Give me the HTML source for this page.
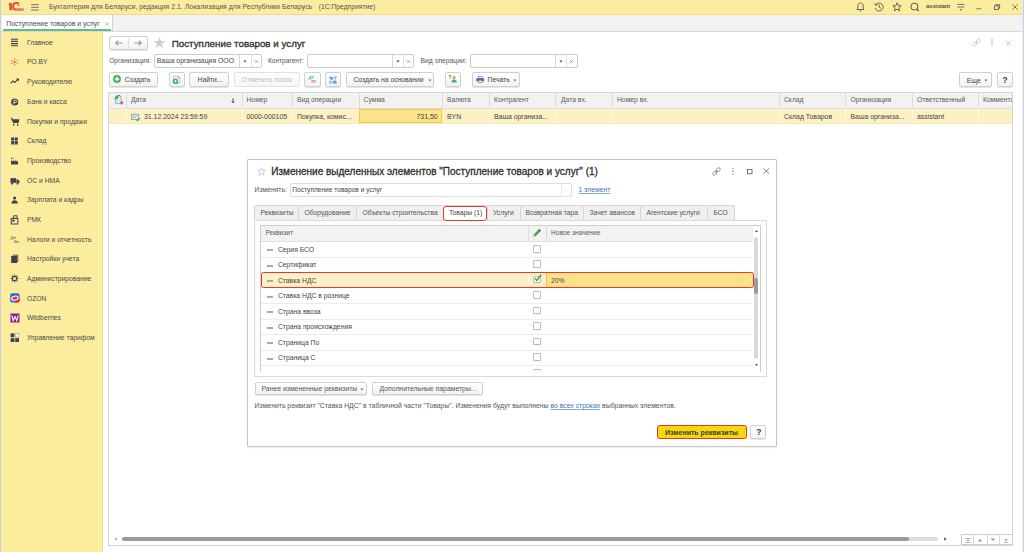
<!DOCTYPE html>
<html><head><meta charset="utf-8">
<style>
*{box-sizing:border-box;margin:0;padding:0}
html,body{width:1024px;height:552px;overflow:hidden;background:#fff;font-family:"Liberation Sans",sans-serif;color:#4a4a4a;font-size:7px}
.a{position:absolute}
.t{position:absolute;white-space:nowrap;line-height:1}
svg{position:absolute;overflow:visible}
#titlebar{left:0;top:0;width:1024px;height:15px;background:#fbec9e;border-bottom:1px solid #efdc8a}
#tabbar{left:0;top:15px;width:1024px;height:17px;background:#f2f2f3;border-bottom:1px solid #d9d9d9}
#sidebar{left:0;top:32px;width:103px;height:520px;background:#fbec9e;border-right:1px solid #e9dc98}
#leftstrip{left:0;top:0;width:1px;height:552px;background:#c9d0da}
#rightstrip{left:1022px;top:0;width:2px;height:552px;background:linear-gradient(90deg,#e9edf2 0,#e9edf2 50%,#c6d1e0 50%)}
.btn{position:absolute;border:1px solid #d0d0d0;border-radius:2px;background:linear-gradient(#fff,#f2f2f2);box-shadow:0 1px 0 rgba(0,0,0,.10)}
.inp{position:absolute;border:1px solid #cbcbcb;border-radius:2px;background:#fff}
.vl{position:absolute;width:1px;background:#dcdcdc}
.hl{position:absolute;height:1px;background:#e6e6e6}
.side .t{color:#4a4a4a;font-size:6.75px;left:27px}
.side svg{left:10px}
.cb{width:7.6px;height:7.6px;border:1px solid #bdbdbd;border-radius:1px;background:#fff;box-shadow:0 0.5px 0.5px rgba(0,0,0,.08)}
</style></head><body>
<div id="titlebar" class="a"></div>
<div id="tabbar" class="a"></div>
<div id="sidebar" class="a"></div>
<div id="leftstrip" class="a"></div>
<div id="rightstrip" class="a"></div>

<!-- title bar -->
<svg style="left:5px;top:0px" width="22" height="14" viewBox="0 0 22 14">
 <path d="M3.3 4.6L4.6 2.9H6.9V10.2H4.4V5.2Z" fill="#ea4a3a"/>
 <path d="M14 3.6C13.4 3.1 12.5 2.9 11.6 2.9C9.6 2.9 8.2 4.4 8.2 6.4C8.2 8.4 9.4 9.6 11 9.6" stroke="#e8453a" stroke-width="1.9" fill="none"/>
 <path d="M12.4 4.2C13.6 4.2 14.6 4.6 14.6 5.8L12.4 5.8Z" fill="#ec5a40"/>
 <rect x="10.2" y="8.2" width="8.6" height="2.5" rx="0.6" fill="#ef7068"/>
</svg>
<svg style="left:31px;top:4px" width="8" height="7" viewBox="0 0 8 7">
 <path d="M0.2 0.6H7.8M0.2 3.3H7.8M0.2 6H7.8" stroke="#666" stroke-width="0.9"/>
</svg>
<div class="t" style="left:49px;top:4px;font-size:6.95px;color:#555">Бухгалтерия для Беларуси, редакция 2.1. Локализация для Республики Беларусь</div>
<div class="t" style="left:318.7px;top:4px;font-size:6.75px;color:#555">(1С:Предприятие)</div>

<svg style="left:856px;top:2px" width="9" height="10" viewBox="0 0 9 10">
 <path d="M1 7.5 L1.8 6.2 L1.8 4 C1.8 2.2 3 1 4.5 1 C6 1 7.2 2.2 7.2 4 L7.2 6.2 L8 7.5 Z" stroke="#555" stroke-width="0.9" fill="none"/>
 <path d="M3.6 8.6 C3.8 9.3 5.2 9.3 5.4 8.6" stroke="#555" stroke-width="0.9" fill="none"/>
</svg>
<svg style="left:874px;top:2px" width="10" height="10" viewBox="0 0 10 10">
 <path d="M1.6 3 A4 4 0 1 1 1.2 6" stroke="#555" stroke-width="0.9" fill="none"/>
 <path d="M0.6 1.2 L1.6 3.2 L3.6 2.8" stroke="#555" stroke-width="0.9" fill="none"/>
 <path d="M5.2 2.6 V5.2 L7 6.4" stroke="#555" stroke-width="0.9" fill="none"/>
</svg>
<svg style="left:892px;top:2px" width="10" height="10" viewBox="0 0 10 10">
 <path d="M5 0.8 L6.2 3.7 L9.2 3.9 L6.9 5.8 L7.6 8.9 L5 7.2 L2.4 8.9 L3.1 5.8 L0.8 3.9 L3.8 3.7 Z" stroke="#555" stroke-width="0.9" fill="none"/>
</svg>
<svg style="left:910px;top:2px" width="10" height="10" viewBox="0 0 10 10">
 <circle cx="4.4" cy="4.6" r="3.5" stroke="#555" stroke-width="1" fill="none"/>
 <path d="M6.8 7 L8.8 9" stroke="#555" stroke-width="1.2"/>
</svg>
<div class="t" style="left:926px;top:4px;font-size:5.9px;color:#555;font-weight:bold;letter-spacing:-0.2px">assistant</div>
<svg style="left:956.5px;top:3px" width="8" height="9" viewBox="0 0 8 9"><path d="M0.3 1.4H7.4M0.3 4H7.4" stroke="#666" stroke-width="0.9"/><path d="M2.4 6.2H5.3L3.85 7.7Z" fill="#555"/></svg>
<svg style="left:976px;top:3px" width="7" height="9" viewBox="0 0 7 9">
 <path d="M0.2 5.8H5.3" stroke="#777" stroke-width="1"/>
</svg>
<svg style="left:994px;top:4px" width="7" height="7" viewBox="0 0 7 7">
 <rect x="0.5" y="1.8" width="3.8" height="3.8" stroke="#666" stroke-width="0.9" fill="none"/>
 <path d="M1.8 1.8V0.6H5.6V4.4H4.3" stroke="#666" stroke-width="0.9" fill="none"/>
</svg>
<svg style="left:1011.8px;top:3.8px" width="6" height="6" viewBox="0 0 6 6">
 <path d="M0.3 0.3L5.7 5.7M5.7 0.3L0.3 5.7" stroke="#666" stroke-width="0.8"/>
</svg>

<!-- tab -->
<div class="a" style="left:2px;top:15px;width:111px;height:16px;background:#fff;border-right:1px solid #d0d0d0"></div>
<div class="a" style="left:3px;top:29px;width:108px;height:2px;background:#5cbf85"></div>
<div class="t" style="left:6.3px;top:20.5px;font-size:6.85px;color:#4a4a4a">Поступление товаров и услуг</div>
<svg style="left:104.5px;top:21.8px" width="4.5" height="4" viewBox="0 0 4.5 4"><path d="M0.3 0.2L4.2 3.8M4.2 0.2L0.3 3.8" stroke="#b0b0b0" stroke-width="0.75"/></svg>
<!-- sidebar -->
<div class="side">
<svg style="top:38px" width="9" height="9" viewBox="0 0 9 9"><path d="M1 1.2H8M1 3.4H8M1 5.6H8M1 7.8H8" stroke="#3f4150" stroke-width="1.1"/></svg>
<div class="t" style="top:39.9px">Главное</div>
<svg style="top:57.5px" width="9" height="8" viewBox="0 0 9 8">
 <circle cx="4.6" cy="4" r="1.3" fill="#f07a2a"/>
 <path d="M4.6 0.5V2M4.6 6V7.6M1 2.2L2.6 3.2M6.6 4.8L8.2 5.8M8.2 2.2L6.6 3.2M2.6 4.8L1 5.8" stroke="#ee5a6a" stroke-width="0.9"/>
</svg>
<div class="t" style="top:59.4px">РО.BY</div>
<svg style="top:78px" width="10" height="6" viewBox="0 0 10 6"><path d="M0.6 5.4L3 3L4.8 4.4L8 1.2" stroke="#3f4150" stroke-width="1.1" fill="none"/><path d="M6 0.6H9V3.6Z" fill="#3f4150"/></svg>
<div class="t" style="top:79.2px">Руководителю</div>
<svg style="top:97.5px" width="9" height="8" viewBox="0 0 9 8"><circle cx="4.7" cy="4" r="3.6" fill="#3f4150"/><path d="M4 6.5V2.2H5.4C6.4 2.2 6.8 2.8 6.8 3.4C6.8 4 6.4 4.6 5.4 4.6H4" stroke="#fbec9e" stroke-width="0.9" fill="none"/></svg>
<div class="t" style="top:98.9px">Банк и касса</div>
<svg style="top:116.5px" width="10" height="9" viewBox="0 0 10 9"><path d="M0.5 0.8H2L2.8 2.2H9.4L8.6 6H3.2Z" fill="#3f4150"/><rect x="3" y="6.8" width="1.4" height="1.8" fill="#3f4150"/><rect x="7" y="6.8" width="1.4" height="1.8" fill="#3f4150"/></svg>
<div class="t" style="top:118.5px">Покупки и продажи</div>
<svg style="top:137px" width="9" height="8" viewBox="0 0 9 8"><rect x="1.2" y="0.5" width="3" height="3" fill="#3f4150"/><rect x="4.8" y="0.5" width="3" height="3" fill="#3f4150"/><rect x="1.2" y="4" width="3" height="3" fill="#3f4150"/><rect x="4.8" y="4" width="3" height="3" fill="#3f4150"/><path d="M0.8 7.6H8.2" stroke="#6a6a70" stroke-width="0.6"/></svg>
<div class="t" style="top:138.2px">Склад</div>
<svg style="top:156.5px" width="9" height="8" viewBox="0 0 9 8"><path d="M1 7.4V3.2L3 4.4V3.2L5.2 4.4V3.2L8 4.6V7.4Z" fill="#3f4150"/><rect x="1" y="0.6" width="1.2" height="1.2" fill="#3f4150"/><rect x="2.8" y="1.4" width="1" height="1" fill="#6a6a70"/></svg>
<div class="t" style="top:157.9px">Производство</div>
<svg style="top:176.5px" width="10" height="8" viewBox="0 0 10 8"><rect x="0.5" y="1.2" width="5.6" height="4.6" fill="#3f4150"/><path d="M6.4 2.6H8.2L9.5 4.2V5.8H6.4Z" fill="#3f4150"/><circle cx="2.2" cy="6.6" r="1.1" fill="#3f4150"/><circle cx="7.6" cy="6.6" r="1.1" fill="#3f4150"/></svg>
<div class="t" style="top:177.6px">ОС и НМА</div>
<svg style="top:196px" width="9" height="8" viewBox="0 0 9 8"><circle cx="4.6" cy="2" r="1.6" fill="#3f4150"/><path d="M1.4 7.4C1.6 5.2 2.8 4.3 4.6 4.3C6.4 4.3 7.6 5.2 7.8 7.4Z" fill="#3f4150"/></svg>
<div class="t" style="top:197.3px">Зарплата и кадры</div>
<svg style="top:214.5px" width="9" height="10" viewBox="0 0 9 10"><rect x="1.2" y="3.4" width="6.6" height="5.6" fill="none" stroke="#3f4150" stroke-width="1"/><rect x="3.6" y="0.8" width="3.4" height="2.6" fill="none" stroke="#3f4150" stroke-width="0.9"/><rect x="2.2" y="4.6" width="2.4" height="2" fill="#3f4150"/></svg>
<div class="t" style="top:216.9px">РМК</div>
<svg style="top:234.5px" width="9" height="9" viewBox="0 0 9 9"><text x="0.5" y="4" font-size="3.6" font-family="Liberation Sans" font-style="italic" fill="#3f4150">Дт</text><text x="4" y="8" font-size="3.6" font-family="Liberation Sans" font-style="italic" fill="#3f4150">Кт</text></svg>
<div class="t" style="top:236.6px">Налоги и отчетность</div>
<svg style="top:254px" width="9" height="10" viewBox="0 0 9 10"><rect x="1.2" y="2" width="5.8" height="7" fill="#3f4150"/><path d="M2.8 1.2H7.8V8" stroke="#3f4150" stroke-width="0.9" fill="none"/></svg>
<div class="t" style="top:256.3px">Настройки учета</div>
<svg style="top:274px" width="9" height="9" viewBox="0 0 9 9"><circle cx="4.6" cy="4.5" r="2.2" stroke="#3f4150" stroke-width="1.2" fill="none"/><path d="M4.6 0.5V1.8M4.6 7.2V8.5M0.6 4.5H1.9M7.3 4.5H8.6M1.8 1.7L2.7 2.6M6.5 6.4L7.4 7.3M7.4 1.7L6.5 2.6M2.7 6.4L1.8 7.3" stroke="#3f4150" stroke-width="1.1"/></svg>
<div class="t" style="top:275.9px">Администрирование</div>
<svg style="top:293.3px" width="10" height="10" viewBox="0 0 10 10"><rect x="0.2" y="0.2" width="9.4" height="9.4" rx="1.8" fill="#2a6ae8"/><path d="M9.6 4.6V7.8A1.8 1.8 0 0 1 7.8 9.6H3.4Z" fill="#e3323b"/><ellipse cx="4.9" cy="5.1" rx="3.9" ry="2.5" transform="rotate(-12 4.9 5.1)" fill="#fff"/><ellipse cx="4.9" cy="5.1" rx="2.7" ry="1.5" transform="rotate(-12 4.9 5.1)" fill="#e3323b"/></svg>
<div class="t" style="top:295.6px">OZON</div>
<svg style="top:313px" width="10" height="10" viewBox="0 0 10 10"><rect x="0.5" y="0.5" width="9" height="9" fill="#8e1b8f"/><path d="M1.8 2.4L3.2 7.6L5 3.6L6.8 7.6L8.2 2.4" stroke="#fff" stroke-width="1.1" fill="none"/></svg>
<div class="t" style="top:315.3px">Wildberries</div>
<svg style="top:332.8px" width="10" height="10" viewBox="0 0 10 10"><rect x="0.6" y="0.4" width="3.8" height="3.8" fill="#3f4150"/><rect x="5.3" y="0.6" width="3.5" height="3.5" fill="#fff" stroke="#8a8a90" stroke-width="0.5"/><rect x="0.6" y="5.2" width="3.8" height="3.8" fill="#3f4150"/><rect x="5.2" y="5.2" width="3.8" height="3.8" fill="#3f4150"/></svg>
<div class="t" style="top:334.9px">Управление тарифом</div>
</div>
<!-- main form header -->
<div class="btn" style="left:108.7px;top:36px;width:39.3px;height:13.5px"></div>
<div class="vl" style="left:128px;top:37.5px;height:11px;background:#dedede"></div>
<svg style="left:115px;top:40px" width="8" height="6" viewBox="0 0 8 6"><path d="M0.8 3H7.6M3.2 0.6L0.8 3L3.2 5.4" stroke="#9a9a9a" stroke-width="1.2" fill="none"/></svg>
<svg style="left:134px;top:40px" width="8" height="6" viewBox="0 0 8 6"><path d="M0.4 3H7.2M4.8 0.6L7.2 3L4.8 5.4" stroke="#9a9a9a" stroke-width="1.2" fill="none"/></svg>
<svg style="left:153.2px;top:37px" width="13" height="11" viewBox="0 0 13 11"><path d="M6.5 0.2L8.1 4.1L12.4 4.2L9 6.8L10.3 10.9L6.5 8.5L2.7 10.9L4 6.8L0.6 4.2L4.9 4.1Z" fill="#cfcfcf"/></svg>
<div class="t" style="left:171.7px;top:38.7px;font-size:9.8px;color:#2e2e2e;-webkit-text-stroke:0.3px #2e2e2e">Поступление товаров и услуг</div>

<svg style="left:972.2px;top:38px" width="9" height="9" viewBox="0 0 9 9"><rect x="4.2" y="1.1" width="4.2" height="3.2" rx="1.6" transform="rotate(-45 6.3 2.7)" fill="none" stroke="#c4c4c4" stroke-width="0.75"/><rect x="0.6" y="4.7" width="4.2" height="3.2" rx="1.6" transform="rotate(-45 2.7 6.3)" fill="none" stroke="#c4c4c4" stroke-width="0.75"/><path d="M3.5 5.5L5.5 3.5" stroke="#c4c4c4" stroke-width="0.75"/></svg>
<svg style="left:991px;top:39px" width="2" height="7" viewBox="0 0 2 7"><path d="M1 0.3V1.4M1 2.9V4M1 5.5V6.6" stroke="#8a8a8a" stroke-width="1.1"/></svg>
<svg style="left:1006.3px;top:40.7px" width="5" height="5" viewBox="0 0 5 5"><path d="M0.3 0.3L4.5 4.5M4.5 0.3L0.3 4.5" stroke="#b0b0b0" stroke-width="0.8"/></svg>

<!-- filters -->
<div class="t" style="left:109.2px;top:58.4px;font-size:6.6px;color:#555">Организация:</div>
<div class="inp" style="left:154.3px;top:54px;width:108px;height:13.5px"></div>
<div class="vl" style="left:239px;top:55px;height:11.5px;background:#d6d6d6"></div>
<div class="vl" style="left:251px;top:55px;height:11.5px;background:#e0e0e0"></div>
<div class="t" style="left:156.8px;top:58.2px;font-size:6.85px;color:#444">Ваша организация ООО</div>
<svg style="left:243px;top:60px" width="4" height="3" viewBox="0 0 4 3"><path d="M0.3 0.5H3.7L2 2.6Z" fill="#555"/></svg>
<svg style="left:254.5px;top:59.5px" width="3" height="3" viewBox="0 0 3 3"><path d="M0.2 0.2L2.8 2.8M2.8 0.2L0.2 2.8" stroke="#8a8a8a" stroke-width="0.7"/></svg>

<div class="t" style="left:267.9px;top:58.4px;font-size:6.6px;color:#555">Контрагент:</div>
<div class="inp" style="left:307.4px;top:54px;width:107px;height:13.5px"></div>
<div class="vl" style="left:392px;top:55px;height:11.5px;background:#d6d6d6"></div>
<div class="vl" style="left:403px;top:55px;height:11.5px;background:#e0e0e0"></div>
<svg style="left:396px;top:60px" width="4" height="3" viewBox="0 0 4 3"><path d="M0.3 0.5H3.7L2 2.6Z" fill="#555"/></svg>
<svg style="left:406.5px;top:59.5px" width="3" height="3" viewBox="0 0 3 3"><path d="M0.2 0.2L2.8 2.8M2.8 0.2L0.2 2.8" stroke="#8a8a8a" stroke-width="0.7"/></svg>

<div class="t" style="left:420.6px;top:58.4px;font-size:6.75px;color:#555">Вид операции:</div>
<div class="inp" style="left:470.2px;top:54px;width:107.5px;height:13.5px"></div>
<div class="vl" style="left:555px;top:55px;height:11.5px;background:#d6d6d6"></div>
<div class="vl" style="left:566px;top:55px;height:11.5px;background:#e0e0e0"></div>
<svg style="left:558.5px;top:60px" width="4" height="3" viewBox="0 0 4 3"><path d="M0.3 0.5H3.7L2 2.6Z" fill="#555"/></svg>
<svg style="left:569.5px;top:59.5px" width="3" height="3" viewBox="0 0 3 3"><path d="M0.2 0.2L2.8 2.8M2.8 0.2L0.2 2.8" stroke="#8a8a8a" stroke-width="0.7"/></svg>

<!-- command bar -->
<div class="btn" style="left:109.3px;top:72.3px;width:48.3px;height:14.3px"></div>
<svg style="left:112.8px;top:75.4px" width="8" height="8" viewBox="0 0 8 8"><circle cx="4" cy="4" r="3.9" fill="#3cb55a"/><path d="M4 1.8V6.2M1.8 4H6.2" stroke="#fff" stroke-width="1.3"/></svg>
<div class="t" style="left:124.8px;top:77.2px;font-size:6.75px;color:#444">Создать</div>

<div class="btn" style="left:169.2px;top:72.3px;width:15.6px;height:14.3px"></div>
<svg style="left:172px;top:75px" width="10" height="10" viewBox="0 0 10 10"><path d="M1.4 1.2H6L8 3.2V7.8H1.4Z" fill="#fff" stroke="#a9b0b8" stroke-width="0.7"/><path d="M6 1.2V3.2H8" fill="none" stroke="#7f9fc8" stroke-width="0.7"/><circle cx="3.5" cy="6.2" r="2.8" fill="#3cb55a"/><path d="M3.5 4.9V7.5M2.2 6.2H4.8" stroke="#fff" stroke-width="0.9"/></svg>

<div class="btn" style="left:189.4px;top:72.3px;width:40px;height:14.3px"></div>
<div class="t" style="left:197.6px;top:77.2px;font-size:6.75px;color:#444">Найти...</div>

<div class="btn" style="left:234.2px;top:72.3px;width:65.6px;height:14.3px;border-color:#e2e2e2;box-shadow:none;background:linear-gradient(#fff,#f6f6f6)"></div>
<div class="t" style="left:241.8px;top:77.2px;font-size:6.75px;color:#bdbdbd">Отменить поиск</div>

<div class="btn" style="left:304.2px;top:72.3px;width:16.4px;height:14.3px"></div>
<svg style="left:307.5px;top:75px" width="10" height="9" viewBox="0 0 10 9"><text x="0.4" y="4" font-size="4" font-weight="bold" font-style="italic" font-family="Liberation Sans" fill="#3cb55a">ДТ</text><text x="3.4" y="8.2" font-size="3.8" font-weight="bold" font-family="Liberation Sans" fill="#e8553c">КТ</text></svg>

<div class="btn" style="left:325.3px;top:72.3px;width:15.3px;height:14.3px"></div>
<svg style="left:329px;top:75.5px" width="8" height="8" viewBox="0 0 8 8"><path d="M0.4 2.4V0.4H2.4M5.6 0.4H7.6V2.4M7.6 5.6V7.6H5.6M2.4 7.6H0.4V5.6" stroke="#8fb3de" stroke-width="0.7" fill="none"/><rect x="1.2" y="1" width="3" height="2.6" fill="#6d9bd6"/><rect x="3.8" y="4.6" width="3.4" height="2.8" fill="#6d9bd6"/><path d="M4.8 1.6L6.4 1.6L6.4 3.6M3.2 6.4L1.6 6.4L1.6 4.4" stroke="#5a8ac8" stroke-width="0.7" fill="none"/></svg>

<div class="btn" style="left:346.4px;top:72.3px;width:87.8px;height:14.3px"></div>
<div class="t" style="left:353.5px;top:77.2px;font-size:6.75px;color:#444">Создать на основании</div>
<svg style="left:428px;top:79.2px" width="4" height="3" viewBox="0 0 4 3"><path d="M0.3 0.4H3.5L1.9 2.4Z" fill="#777"/></svg>

<div class="btn" style="left:445.4px;top:72.3px;width:15.9px;height:14.3px"></div>
<svg style="left:448px;top:74px" width="10" height="10" viewBox="0 0 10 10"><text x="0.6" y="5" font-size="4.6" font-weight="bold" font-family="Liberation Sans" fill="#555">?</text><circle cx="6.1" cy="3.8" r="1.7" fill="#d9a55a"/><path d="M3.3 8.6C3.4 6.6 4.4 5.6 6.1 5.6C7.8 5.6 8.7 6.6 8.8 8.6Z" fill="#4bb56a"/></svg>

<div class="btn" style="left:472.4px;top:72.3px;width:47.9px;height:14.3px"></div>
<svg style="left:475.7px;top:75.8px" width="9" height="7" viewBox="0 0 9 7"><rect x="2.3" y="0.3" width="3.8" height="2" fill="#fff" stroke="#4a74ad" stroke-width="0.6"/><rect x="0.3" y="2" width="7.8" height="3.4" rx="0.9" fill="#4a74ad"/><rect x="2.3" y="4.2" width="3.8" height="2.4" fill="#fff" stroke="#4a74ad" stroke-width="0.6"/></svg>
<div class="t" style="left:487.6px;top:77.2px;font-size:6.75px;color:#444">Печать</div>
<svg style="left:513.2px;top:79.2px" width="4" height="3" viewBox="0 0 4 3"><path d="M0.3 0.4H3.5L1.9 2.4Z" fill="#777"/></svg>

<div class="btn" style="left:959.4px;top:72.3px;width:32.6px;height:14.3px"></div>
<div class="t" style="left:966.7px;top:77.2px;font-size:7px;color:#444">Еще</div>
<svg style="left:984px;top:79.2px" width="4" height="3" viewBox="0 0 4 3"><path d="M0.3 0.4H3.5L1.9 2.4Z" fill="#777"/></svg>
<div class="btn" style="left:997px;top:72.3px;width:16px;height:14.3px"></div>
<div class="t" style="left:1002.4px;top:76px;font-size:8.4px;font-weight:bold;color:#3a3a3a">?</div>
<!-- list table -->
<div class="a" style="left:108px;top:92px;width:905px;height:454px;border:1px solid #d6d6d6;background:#fff"></div>
<div class="a" style="left:109px;top:93px;width:903px;height:16px;background:#f2f2f2;border-bottom:1px solid #dedede"></div>
<div class="a" style="left:109px;top:109px;width:903px;height:15px;background:#fdf0c3;border-bottom:1px solid #f6e9c0"></div>
<div class="vl" style="left:126px;top:93px;height:15px;background:#dcdcdc"></div>
<div class="vl" style="left:242px;top:93px;height:15px;background:#dcdcdc"></div>
<div class="vl" style="left:292px;top:93px;height:15px;background:#dcdcdc"></div>
<div class="vl" style="left:359px;top:93px;height:15px;background:#dcdcdc"></div>
<div class="vl" style="left:442px;top:93px;height:15px;background:#dcdcdc"></div>
<div class="vl" style="left:489px;top:93px;height:15px;background:#dcdcdc"></div>
<div class="vl" style="left:555px;top:93px;height:15px;background:#dcdcdc"></div>
<div class="vl" style="left:612px;top:93px;height:15px;background:#dcdcdc"></div>
<div class="vl" style="left:779px;top:93px;height:15px;background:#dcdcdc"></div>
<div class="vl" style="left:845px;top:93px;height:15px;background:#dcdcdc"></div>
<div class="vl" style="left:912px;top:93px;height:15px;background:#dcdcdc"></div>
<div class="vl" style="left:978px;top:93px;height:15px;background:#dcdcdc"></div>
<div class="a" style="left:126px;top:109px;width:1px;height:14px;border-left:1px dotted #fff"></div>
<div class="a" style="left:242px;top:109px;width:1px;height:14px;border-left:1px dotted #fff"></div>
<div class="a" style="left:292px;top:109px;width:1px;height:14px;border-left:1px dotted #fff"></div>
<div class="a" style="left:489px;top:109px;width:1px;height:14px;border-left:1px dotted #fff"></div>
<div class="a" style="left:555px;top:109px;width:1px;height:14px;border-left:1px dotted #fff"></div>
<div class="a" style="left:612px;top:109px;width:1px;height:14px;border-left:1px dotted #fff"></div>
<div class="a" style="left:779px;top:109px;width:1px;height:14px;border-left:1px dotted #fff"></div>
<div class="a" style="left:845px;top:109px;width:1px;height:14px;border-left:1px dotted #fff"></div>
<div class="a" style="left:912px;top:109px;width:1px;height:14px;border-left:1px dotted #fff"></div>
<div class="a" style="left:978px;top:109px;width:1px;height:14px;border-left:1px dotted #fff"></div>
<div class="a" style="left:359px;top:109px;width:83px;height:14px;background:#fbe38c;border:1px solid #f3cd3c"></div>
<svg style="left:113.5px;top:95px" width="10" height="10" viewBox="0 0 10 10"><path d="M1.6 3.2C1.6 1.8 2.8 0.6 4.4 0.6C6 0.6 7.4 1.8 7.4 3.4V8.6H1.6Z" fill="#dbe8f5" stroke="#7d9dc6" stroke-width="0.7"/><path d="M0.8 3.4C0.8 1.6 2.2 0.4 3.8 0.6L4.6 2.6L2.6 4.4Z" fill="#3cae5a"/><path d="M3.8 0.5L5.6 0.3L6.4 1.6" stroke="#444" stroke-width="0.6" fill="none"/><path d="M0.4 3.6L1.4 5" stroke="#b08050" stroke-width="0.7"/><path d="M6.2 7.8H9.4M7.8 6.2V9.4" stroke="#e23a3a" stroke-width="1.1"/></svg>
<div class="hdrt" style="color:#5a5a5a">
<div class="t" style="left:131px;top:96.8px;font-size:6.75px">Дата</div>
<svg style="left:231px;top:97.5px" width="4" height="5" viewBox="0 0 4 5"><path d="M2 0.2V4.6M0.7 3.2L2 4.8L3.3 3.2" stroke="#333" stroke-width="0.8" fill="none"/></svg>
<div class="t" style="left:246.5px;top:96.8px;font-size:6.75px">Номер</div>
<div class="t" style="left:297px;top:96.8px;font-size:6.75px">Вид операции</div>
<div class="t" style="left:363.6px;top:96.8px;font-size:6.75px">Сумма</div>
<div class="t" style="left:447px;top:96.8px;font-size:6.75px">Валюта</div>
<div class="t" style="left:494px;top:96.8px;font-size:6.75px">Контрагент</div>
<div class="t" style="left:561px;top:96.8px;font-size:6.75px">Дата вх.</div>
<div class="t" style="left:617px;top:96.8px;font-size:6.75px">Номер вх.</div>
<div class="t" style="left:784px;top:96.8px;font-size:6.75px">Склад</div>
<div class="t" style="left:850.5px;top:96.8px;font-size:6.75px">Организация</div>
<div class="t" style="left:917px;top:96.8px;font-size:6.75px">Ответственный</div>
<div class="a" style="left:983px;top:96px;width:29px;height:10px;overflow:hidden"><div class="t" style="left:0;top:0.8px;font-size:6.75px">Комментарий</div></div>
</div>
<svg style="left:131px;top:112.6px" width="10" height="9" viewBox="0 0 10 9"><rect x="0.5" y="1.2" width="7" height="5.2" fill="#e8ecf0" stroke="#7d8a96" stroke-width="0.7"/><path d="M1.5 3H6.5M1.5 4.6H5" stroke="#7d8a96" stroke-width="0.5"/><path d="M5.4 6.6L6.6 7.8L9.2 5" stroke="#2fa84f" stroke-width="1.1" fill="none"/></svg>
<div class="rowt" style="color:#444">
<div class="t" style="left:144px;top:113.5px;font-size:6.9px">31.12.2024 23:59:59</div>
<div class="t" style="left:246.5px;top:113.5px;font-size:6.9px">0000-000105</div>
<div class="t" style="left:297px;top:113.5px;font-size:6.9px">Покупка, комис...</div>
<div class="t" style="left:416.5px;top:113.5px;font-size:6.9px">731,50</div>
<div class="t" style="left:447px;top:113.5px;font-size:6.9px">BYN</div>
<div class="t" style="left:494px;top:113.5px;font-size:6.9px">Ваша организа...</div>
<div class="t" style="left:784px;top:113.5px;font-size:6.9px">Склад Товаров</div>
<div class="t" style="left:850.5px;top:113.5px;font-size:6.9px">Ваша организа...</div>
<div class="t" style="left:917px;top:113.5px;font-size:6.9px">assistant</div>
</div>
<!-- bottom scrollbar + nav -->
<svg style="left:113.5px;top:536.8px" width="3" height="4" viewBox="0 0 3 4"><path d="M2.6 0.2V3.8L0.2 2Z" fill="#aaa"/></svg>
<div class="a" style="left:121.7px;top:537.3px;width:816.5px;height:3.6px;border-radius:2px;background:#dcdcdc"></div>
<div class="a" style="left:121.7px;top:537.3px;width:787.3px;height:3.6px;border-radius:2px;background:#9a9a9a"></div>
<svg style="left:943.5px;top:537px" width="3" height="4" viewBox="0 0 3 4"><path d="M0.2 0.2V3.8L2.6 2Z" fill="#555"/></svg>
<div class="a" style="left:961px;top:534.2px;width:51.6px;height:11.3px;border:1px solid #cdcdcd;background:#fff"></div>
<div class="vl" style="left:973.3px;top:534.2px;height:11px;background:#d6d6d6"></div>
<div class="vl" style="left:986.5px;top:534.2px;height:11px;background:#d6d6d6"></div>
<div class="vl" style="left:999.4px;top:534.2px;height:11px;background:#d6d6d6"></div>
<svg style="left:964.5px;top:537.5px" width="6" height="5" viewBox="0 0 6 5"><path d="M0.5 0.5H5.5M0.5 4.5H5.5" stroke="#999" stroke-width="0.7"/><path d="M1.5 2.6H4.5L3 1.4Z M1.5 2.4H4.5L3 3.6Z" fill="#999"/></svg>
<svg style="left:977px;top:538.2px" width="6" height="4" viewBox="0 0 6 4"><path d="M0.6 3.4H5.4L3 1Z" fill="#999"/></svg>
<svg style="left:990px;top:538.2px" width="6" height="4" viewBox="0 0 6 4"><path d="M0.6 0.6H5.4L3 3Z" fill="#999"/></svg>
<svg style="left:1003px;top:537.5px" width="6" height="5" viewBox="0 0 6 5"><path d="M0.5 4.5H5.5" stroke="#999" stroke-width="0.7"/><path d="M1.2 1.2H4.8L3 3.4Z" fill="#999"/></svg>
<!-- dialog -->
<div class="a" style="left:247px;top:159px;width:530px;height:287.5px;background:#fff;border:1px solid #c6c6c6;border-radius:1px;box-shadow:0 0 2px rgba(0,0,0,.05),0 1px 2px rgba(0,0,0,.05)"></div>
<svg style="left:256.5px;top:167px" width="9" height="9" viewBox="0 0 9 9"><path d="M4.5 0.5L5.6 3.3L8.5 3.4L6.2 5.2L7.1 8.3L4.5 6.6L1.9 8.3L2.8 5.2L0.5 3.4L3.4 3.3Z" fill="none" stroke="#c4c4c4" stroke-width="0.8"/></svg>
<div class="t" style="left:271.25px;top:167.3px;font-size:10px;color:#2e2e2e;-webkit-text-stroke:0.3px #2e2e2e">Изменение выделенных элементов "Поступление товаров и услуг" (1)</div>
<svg style="left:711.5px;top:166.5px" width="9" height="9" viewBox="0 0 9 9"><rect x="4.2" y="1.1" width="4.2" height="3.2" rx="1.6" transform="rotate(-45 6.3 2.7)" fill="none" stroke="#777" stroke-width="0.75"/><rect x="0.6" y="4.7" width="4.2" height="3.2" rx="1.6" transform="rotate(-45 2.7 6.3)" fill="none" stroke="#777" stroke-width="0.75"/><path d="M3.5 5.5L5.5 3.5" stroke="#777" stroke-width="0.75"/></svg>
<svg style="left:732.2px;top:168px" width="2" height="7" viewBox="0 0 2 7"><path d="M1 0.3V1.4M1 2.9V4M1 5.5V6.6" stroke="#555" stroke-width="1"/></svg>
<svg style="left:746.6px;top:168.8px" width="6" height="6" viewBox="0 0 6 6"><rect x="0.4" y="0.4" width="4.6" height="4.4" fill="none" stroke="#555" stroke-width="0.8"/></svg>
<svg style="left:762.5px;top:168px" width="6.5" height="6" viewBox="0 0 6.5 6"><path d="M0.4 0.3L6.1 5.7M6.1 0.3L0.4 5.7" stroke="#666" stroke-width="0.8"/></svg>

<div class="t" style="left:254.6px;top:187.2px;font-size:6.75px;color:#555">Изменять:</div>
<div class="inp" style="left:289.8px;top:183px;width:282.5px;height:13.8px;border-color:#dedede"></div>
<div class="vl" style="left:561px;top:184px;height:11.8px;background:#e6e6e6"></div>
<div class="t" style="left:292.3px;top:187.2px;font-size:6.6px;color:#444">Поступление товаров и услуг</div>
<div class="t" style="left:564.5px;top:186px;font-size:6px;color:#bbb">...</div>
<div class="t" style="left:578.4px;top:187.2px;font-size:6.75px;color:#4072b8;text-decoration:underline;text-decoration-color:#86a8d8">1 элемент</div>

<!-- tabs -->
<div class="a" style="left:254px;top:220px;width:513px;height:157px;border:1px solid #dadada;background:#fff"></div>
<div class="tabs">
<div class="a" style="left:254px;top:205px;width:45px;height:15px;background:#efefef;border:1px solid #d6d6d6;border-bottom:none;border-radius:2px 2px 0 0;"></div>
<div class="a" style="left:298px;top:205px;width:59px;height:15px;background:#efefef;border:1px solid #d6d6d6;border-bottom:none;border-radius:2px 2px 0 0;"></div>
<div class="a" style="left:356px;top:205px;width:88px;height:15px;background:#efefef;border:1px solid #d6d6d6;border-bottom:none;border-radius:2px 2px 0 0;"></div>
<div class="a" style="left:443px;top:205px;width:45px;height:16px;background:#fff;border:1px solid #d6d6d6;border-bottom:none;border-radius:2px 2px 0 0;"></div>
<div class="a" style="left:487px;top:205px;width:34px;height:15px;background:#efefef;border:1px solid #d6d6d6;border-bottom:none;border-radius:2px 2px 0 0;"></div>
<div class="a" style="left:520px;top:205px;width:64px;height:15px;background:#efefef;border:1px solid #d6d6d6;border-bottom:none;border-radius:2px 2px 0 0;"></div>
<div class="a" style="left:583px;top:205px;width:58px;height:15px;background:#efefef;border:1px solid #d6d6d6;border-bottom:none;border-radius:2px 2px 0 0;"></div>
<div class="a" style="left:640px;top:205px;width:68px;height:15px;background:#efefef;border:1px solid #d6d6d6;border-bottom:none;border-radius:2px 2px 0 0;"></div>
<div class="a" style="left:707px;top:205px;width:28px;height:15px;background:#efefef;border:1px solid #d6d6d6;border-bottom:none;border-radius:2px 2px 0 0;"></div>
</div>
<div class="a" style="left:442.8px;top:205.5px;width:44.2px;height:15.8px;border:1.6px solid #e4392b;border-radius:3px"></div>
<div style="color:#555">
<div class="t" style="left:260.5px;top:209.8px;font-size:6.75px">Реквизиты</div>
<div class="t" style="left:304.5px;top:209.8px;font-size:6.75px">Оборудование</div>
<div class="t" style="left:362.5px;top:209.8px;font-size:6.75px">Объекты строительства</div>
<div class="t" style="left:449px;top:209.8px;font-size:6.75px;color:#444">Товары (1)</div>
<div class="t" style="left:493px;top:209.8px;font-size:6.75px">Услуги</div>
<div class="t" style="left:525.5px;top:209.8px;font-size:6.75px">Возвратная тара</div>
<div class="t" style="left:589.5px;top:209.8px;font-size:6.75px">Зачет авансов</div>
<div class="t" style="left:646.5px;top:209.8px;font-size:6.75px">Агентские услуги</div>
<div class="t" style="left:713.5px;top:209.8px;font-size:6.75px">БСО</div>
</div>

<!-- inner table -->
<div class="a" style="left:260px;top:225px;width:501px;height:147px;border:1px solid #cdcdcd;background:#fff;overflow:hidden">
 <div class="a" style="left:0;top:0;width:492.3px;height:16.2px;background:#f2f2f2;border-bottom:1px solid #e0e0e0"></div>
 <div class="vl" style="left:267.1px;top:0;height:16.2px;background:#dedede"></div>
 <div class="vl" style="left:285.1px;top:0;height:16.2px;background:#dedede"></div>
</div>
<div class="t" style="left:265.4px;top:230.3px;font-size:6.6px;color:#5a5a5a">Реквизит</div>
<svg style="left:532.8px;top:228.8px" width="8" height="8" viewBox="0 0 8 8"><path d="M0.6 7.4L1 5.2L5.4 0.8L7.2 2.6L2.8 7Z" fill="#4aa04a"/><path d="M5.4 0.8L6.2 0L8 1.8L7.2 2.6Z" fill="#3a3a50"/><path d="M0.6 7.4L1 5.2L2.8 7Z" fill="#c8a070"/></svg>
<div class="t" style="left:551px;top:230.3px;font-size:6.6px;color:#5a5a5a">Новое значение</div>

<!-- rows -->
<div class="hl" style="left:261.3px;top:256.6px;width:491.3px;background:#ececec"></div>
<div class="hl" style="left:261.3px;top:303.1px;width:491.3px;background:#ececec"></div>
<div class="hl" style="left:261.3px;top:318.6px;width:491.3px;background:#ececec"></div>
<div class="hl" style="left:261.3px;top:334.1px;width:491.3px;background:#ececec"></div>
<div class="hl" style="left:261.3px;top:349.6px;width:491.3px;background:#ececec"></div>
<div class="hl" style="left:261.3px;top:364.6px;width:491.3px;background:#ececec"></div>

<div class="a" style="left:261.5px;top:272.3px;width:292px;height:15px;background:#fdf0c6"></div>
<div class="a" style="left:546.4px;top:272.3px;width:207px;height:15px;background:#fde28b;border-left:1px solid #f2c232"></div>
<div class="a" style="left:528.4px;top:273px;width:0;height:14px;border-left:1px dotted #fff"></div>
<div class="a" style="left:261.3px;top:272.1px;width:492.6px;height:16.2px;border:1.7px solid #e4392b;border-radius:2.5px"></div>

<div class="rows" style="color:#444">
<svg style="left:267px;top:249.4px" width="6" height="2" viewBox="0 0 6 2"><path d="M0 1H6" stroke="#6d88b4" stroke-width="1.4"/></svg>
<div class="t" style="left:277.9px;top:246.7px;font-size:6.8px">Серия БСО</div>
<svg style="left:267px;top:264.9px" width="6" height="2" viewBox="0 0 6 2"><path d="M0 1H6" stroke="#6d88b4" stroke-width="1.4"/></svg>
<div class="t" style="left:277.9px;top:262.2px;font-size:6.8px">Сертификат</div>
<svg style="left:267px;top:280.4px" width="6" height="2" viewBox="0 0 6 2"><path d="M0 1H6" stroke="#6d88b4" stroke-width="1.4"/></svg>
<div class="t" style="left:277.9px;top:277.7px;font-size:6.8px">Ставка НДС</div>
<svg style="left:267px;top:295.9px" width="6" height="2" viewBox="0 0 6 2"><path d="M0 1H6" stroke="#6d88b4" stroke-width="1.4"/></svg>
<div class="t" style="left:277.9px;top:293.2px;font-size:6.8px">Ставка НДС в рознице</div>
<svg style="left:267px;top:311.4px" width="6" height="2" viewBox="0 0 6 2"><path d="M0 1H6" stroke="#6d88b4" stroke-width="1.4"/></svg>
<div class="t" style="left:277.9px;top:308.7px;font-size:6.8px">Страна ввоза</div>
<svg style="left:267px;top:326.9px" width="6" height="2" viewBox="0 0 6 2"><path d="M0 1H6" stroke="#6d88b4" stroke-width="1.4"/></svg>
<div class="t" style="left:277.9px;top:324.2px;font-size:6.8px">Страна происхождения</div>
<svg style="left:267px;top:342.4px" width="6" height="2" viewBox="0 0 6 2"><path d="M0 1H6" stroke="#6d88b4" stroke-width="1.4"/></svg>
<div class="t" style="left:277.9px;top:339.7px;font-size:6.8px">Страница По</div>
<svg style="left:267px;top:357.9px" width="6" height="2" viewBox="0 0 6 2"><path d="M0 1H6" stroke="#6d88b4" stroke-width="1.4"/></svg>
<div class="t" style="left:277.9px;top:355.2px;font-size:6.8px">Страница С</div>
<div class="t" style="left:551px;top:277.7px;font-size:6.8px">20%</div>
</div>
<div class="cbs">
<div class="a cb" style="left:533.3px;top:245px"></div>
<div class="a cb" style="left:533.3px;top:260.3px"></div>
<div class="a cb" style="left:533.3px;top:275.8px"></div>
<div class="a cb" style="left:533.3px;top:291px"></div>
<div class="a cb" style="left:533.3px;top:306.5px"></div>
<div class="a cb" style="left:533.3px;top:322px"></div>
<div class="a cb" style="left:533.3px;top:337.5px"></div>
<div class="a cb" style="left:533.3px;top:353px"></div>
<div class="a cb" style="left:533.3px;top:368.5px"></div>
</div>
<svg style="left:534px;top:273.5px" width="8" height="8" viewBox="0 0 8 8"><path d="M0.8 4.2L2.8 6.4L7.2 0.8" stroke="#2fa84f" stroke-width="1.5" fill="none"/></svg>
<div class="a" style="left:261px;top:371.3px;width:499px;height:5px;background:#fff"></div>
<!-- scrollbar -->
<svg style="left:754.6px;top:230.2px" width="3" height="2" viewBox="0 0 3 2"><path d="M0 2H3L1.5 0Z" fill="#555"/></svg>
<div class="a" style="left:754.2px;top:237.4px;width:3.8px;height:121.2px;border-radius:2px;background:#d9d9d9"></div>
<div class="a" style="left:754.2px;top:278px;width:3.8px;height:16px;border-radius:2px;background:#9c9c9c"></div>
<svg style="left:754.6px;top:364.2px" width="3" height="2" viewBox="0 0 3 2"><path d="M0 0H3L1.5 2Z" fill="#555"/></svg>

<!-- bottom buttons -->
<div class="btn" style="left:254.8px;top:382px;width:112.1px;height:13.4px"></div>
<div class="t" style="left:261.5px;top:386px;font-size:6.85px;color:#555">Ранее измененные реквизиты</div>
<svg style="left:360px;top:387.6px" width="4" height="3" viewBox="0 0 4 3"><path d="M0.3 0.4H3.5L1.9 2.4Z" fill="#777"/></svg>
<div class="btn" style="left:372.3px;top:382px;width:111.1px;height:13.4px"></div>
<div class="t" style="left:379.5px;top:386px;font-size:6.85px;color:#555">Дополнительные параметры...</div>
<div class="t" style="left:254.6px;top:403.2px;font-size:6.85px;color:#555">Изменить реквизит "Ставка НДС" в табличной части "Товары". Изменения будут выполнены <span style="color:#4072b8;text-decoration:underline;text-decoration-color:#86a8d8">во всех строках</span> выбранных элементов.</div>

<div class="a" style="left:657px;top:425px;width:89.5px;height:14.3px;background:#f5d80c;border:1.7px solid #e4392b;border-radius:2.5px"></div>
<div class="t" style="left:665px;top:428.8px;font-size:7px;font-weight:bold;color:#3a3a3a">Изменить реквизиты</div>
<div class="btn" style="left:750px;top:425px;width:16px;height:13.8px"></div>
<div class="t" style="left:756.2px;top:428.3px;font-size:8.6px;font-weight:bold;color:#3a3a3a">?</div>
</body></html>
